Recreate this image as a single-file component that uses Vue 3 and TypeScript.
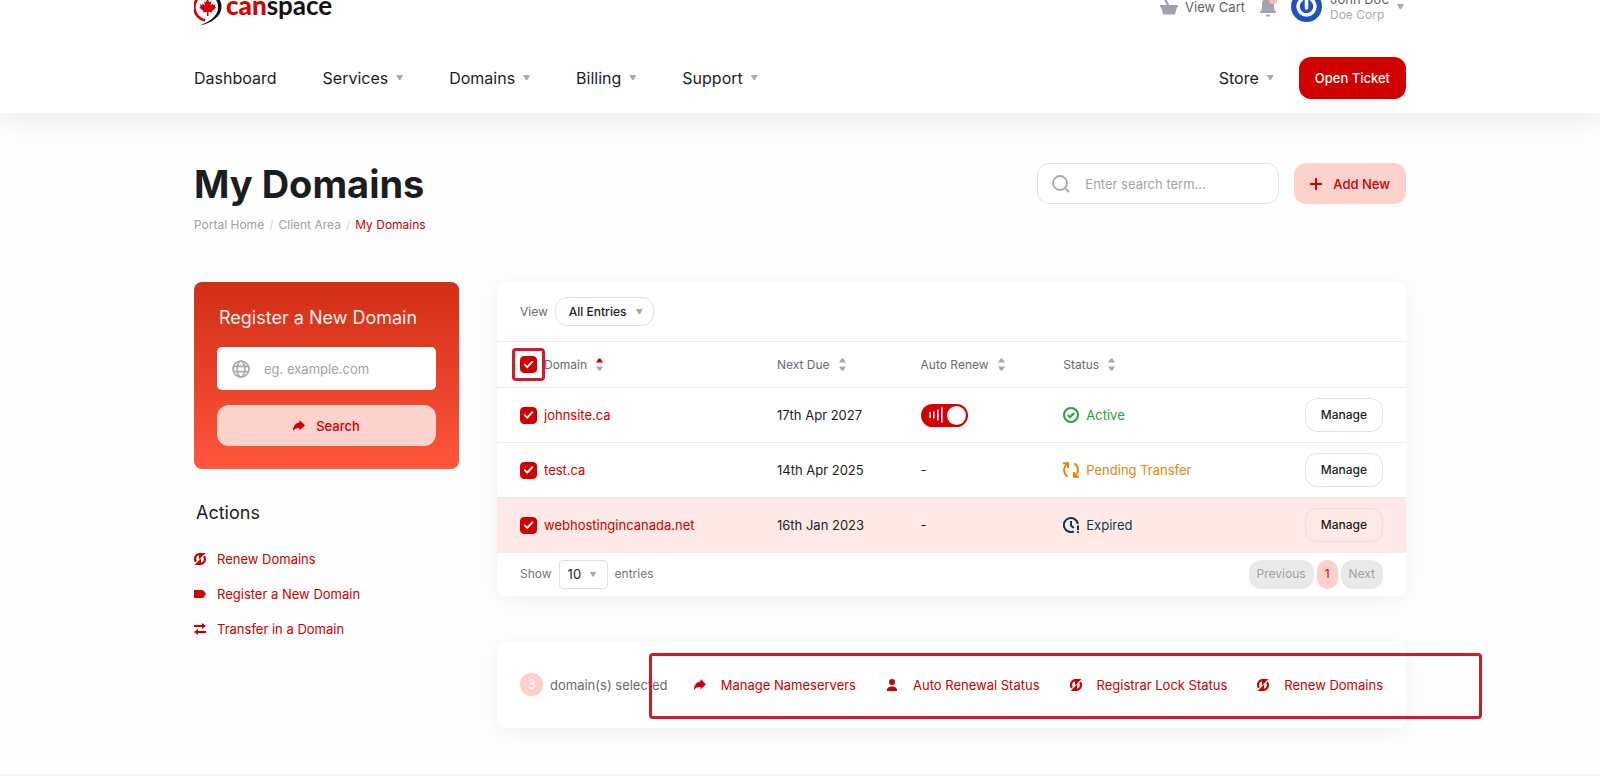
<script setup lang="ts">
import { computed, ref } from 'vue'

interface DomainRow {
  name: string
  due: string
  autoRenew: boolean | null
  status: string
  kind: 'active' | 'pending' | 'expired'
  selected: boolean
}

const menu: { label: string; drop: boolean }[] = [
  { label: 'Dashboard', drop: false },
  { label: 'Services', drop: true },
  { label: 'Domains', drop: true },
  { label: 'Billing', drop: true },
  { label: 'Support', drop: true },
]

const rows = ref<DomainRow[]>([
  { name: 'johnsite.ca', due: '17th Apr 2027', autoRenew: true, status: 'Active', kind: 'active', selected: true },
  { name: 'test.ca', due: '14th Apr 2025', autoRenew: null, status: 'Pending Transfer', kind: 'pending', selected: true },
  { name: 'webhostingincanada.net', due: '16th Jan 2023', autoRenew: null, status: 'Expired', kind: 'expired', selected: true },
])

const columns = ['Domain', 'Next Due', 'Auto Renew', 'Status']
const hovered = 'webhostingincanada.net'

const icons: Record<string, string> = {
  renew:
    'M5 0h6.500L5 6.500V2.300C3.200 2.800 2.200 4.200 2.200 6c0 .8.2 1.500.6 2.100L1.300 9.600C.4 8.600 0 7.400 0 6 0 2.800 2.200.4 5 0ZM7 12H.5L7 5.500v4.200C8.800 9.200 9.800 7.800 9.800 6c0-.8-.2-1.500-.6-2.100l1.500-1.500c.9 1 1.300 2.200 1.300 3.600 0 3.200-2.200 5.600-5 6Z',
  tag: 'M0 2h8.200c.6 0 1 .2 1.400.7L12 6 9.600 9.300c-.4.5-.8.7-1.400.7H0Z',
  transfer: 'M0 2h8V0l4 3-4 3V4H0ZM12 8H4V6L0 9l4 3v-2h8Z',
  share: 'M6.500 0 12 5.200 6.500 10.400V8C3.600 7.800 1.500 8.600 0 11 .1 6 2.600 2.900 6.500 2.600Z',
  user: 'M6 0a3 3 0 1 1 0 6 3 3 0 0 1 0-6ZM.8 12C.8 8.800 3 7.400 6 7.400S11.200 8.800 11.200 12Z',
}

const sideActions = [
  { icon: 'renew', label: 'Renew Domains' },
  { icon: 'tag', label: 'Register a New Domain' },
  { icon: 'transfer', label: 'Transfer in a Domain' },
]
const bulkActions = [
  { icon: 'share', label: 'Manage Nameservers' },
  { icon: 'user', label: 'Auto Renewal Status' },
  { icon: 'renew', label: 'Registrar Lock Status' },
  { icon: 'renew', label: 'Renew Domains' },
]

const selectedCount = computed(() => rows.value.filter((r) => r.selected).length)
const allSelected = computed({
  get: () => rows.value.every((r) => r.selected),
  set: (v: boolean) => rows.value.forEach((r) => (r.selected = v)),
})
</script>

<template>
  <div class="page">
    <header class="site-header">
      <div class="wrap top-bar">
        <a href="#" class="logo" aria-label="canspace">
          <svg width="30" height="40" viewBox="0 0 30 40">
            <path d="M11 34.500A13.500 13.500 0 0 1 9 8.700" fill="none" stroke="#d00000" stroke-width="2.600" />
            <path d="M12 7.500A13.400 13.400 0 0 1 27.500 21C27.500 31 17 37 6 39.500 14 36 24.200 31 24.200 21 24.200 14 19 9.500 12 9.500Z" fill="#111" />
            <path d="M13.500 13l1.900 3.200 1.900-.9-.7 4.200 2.200-2 .6 1.400 2.300-.4-.9 2.300 1.300.8-4 3.300.4 1.500-4.100-.6.100 4.200h-1.500l.1-4.200-4.200.6.500-1.500-4.100-3.300 1.300-.8-.8-2.300 2.300.4.600-1.400 2.200 2-.8-4.200 1.800.9Z" fill="#d00000" />
          </svg>
          <span class="brand"><b>can</b>space</span>
        </a>
        <div class="account">
          <a href="#" class="cart">
            <svg width="18" height="17" viewBox="0 0 18 17"><path d="M0 7h18v2h-1l-2 7.500H3.200L1 9H0ZM3 0l2.500-.5L9 6.500 7.500 8Z" fill="#a2a2ae" /></svg>
            View Cart
          </a>
          <button type="button" class="bell" aria-label="Notifications">
            <svg width="18" height="22" viewBox="0 0 18 22">
              <path d="M9 2c3.500 0 6 2.500 6 6v5.500l2 2.500v1H1v-1l2-2.500V8c0-3.500 2.500-6 6-6ZM6.800 18.500h4.400a2.200 2.200 0 0 1-4.400 0Z" fill="#a2a2ae" />
              <circle cx="14" cy="4" r="4" fill="#fdb9b5" />
            </svg>
          </button>
          <button type="button" class="profile">
            <svg width="31" height="31" viewBox="0 0 31 31">
              <circle cx="15.500" cy="15.500" r="15.500" fill="#1f52be" />
              <circle cx="15.500" cy="15.500" r="8.500" fill="#1f52be" stroke="#fff" stroke-width="3.500" />
              <path d="M15.500 5v9" stroke="#1f52be" stroke-width="7" />
              <path d="M15.500 8v9" stroke="#fff" stroke-width="3.500" stroke-linecap="round" />
            </svg>
            <span class="names"><span class="person">John Doe</span><span class="corp">Doe Corp</span></span>
            <i class="caret"></i>
          </button>
        </div>
      </div>
      <div class="wrap nav-bar">
        <nav class="menu">
          <a v-for="item in menu" :key="item.label" href="#">{{ item.label }}<i v-if="item.drop" class="caret"></i></a>
        </nav>
        <div class="menu-right">
          <a href="#">Store<i class="caret"></i></a>
          <button type="button" class="ticket">Open Ticket</button>
        </div>
      </div>
    </header>

    <main class="wrap">
      <div class="title-row">
        <div>
          <h1>My Domains</h1>
          <nav class="crumbs" aria-label="Breadcrumb">
            <a href="#">Portal Home</a><span>/</span><a href="#">Client Area</a><span>/</span><a href="#" class="current">My Domains</a>
          </nav>
        </div>
        <div class="tools">
          <label class="search">
            <svg width="18" height="18" viewBox="0 0 18 18" fill="none" stroke="#aaa" stroke-width="1.800"><circle cx="8" cy="8" r="7" /><path d="m13 13 4 4" /></svg>
            <input type="text" placeholder="Enter search term..." aria-label="Search domains" />
          </label>
          <button type="button" class="soft add">
            <svg width="12" height="12" viewBox="0 0 12 12"><path d="M6 0v12M0 6h12" stroke="#c80000" stroke-width="2" /></svg>
            Add New
          </button>
        </div>
      </div>

      <div class="columns">
        <aside>
          <form class="register" @submit.prevent>
            <h2>Register a New Domain</h2>
            <label class="domain-field">
              <svg width="18" height="18" viewBox="0 0 18 18" fill="none" stroke="#aaa" stroke-width="1.700"><circle cx="9" cy="9" r="8" /><ellipse cx="9" cy="9" rx="3.800" ry="8" /><path d="M1.500 6.300h15M1.500 11.700h15" /></svg>
              <input type="text" placeholder="eg. example.com" aria-label="Domain name" />
            </label>
            <button type="submit" class="soft">
              <svg width="12" height="12" viewBox="0 0 12 12"><path :d="icons.share" fill="#c80000" /></svg>
              Search
            </button>
          </form>
          <h3>Actions</h3>
          <ul class="side-actions">
            <li v-for="a in sideActions" :key="a.label">
              <a href="#"><svg width="12" height="12" viewBox="0 0 12 12"><path :d="icons[a.icon]" fill="#c80000" /></svg>{{ a.label }}</a>
            </li>
          </ul>
        </aside>

        <div class="content">
          <section class="card">
            <div class="view-row">
              <label for="view">View</label>
              <span class="pick round">
                <select id="view"><option>All Entries</option></select>
                <i class="caret"></i>
              </span>
            </div>
            <table>
              <colgroup><col class="c-domain" /><col class="c-due" /><col class="c-renew" /><col class="c-status" /><col /></colgroup>
              <thead>
                <tr>
                  <th v-for="(c, i) in columns" :key="c">
                    <div class="cell">
                      <span v-if="i === 0" class="all">
                        <input v-model="allSelected" type="checkbox" class="tick" aria-label="Select all domains" />
                        <span class="mark"></span>
                      </span>
                      <button type="button" class="sort">
                        {{ c }}
                        <svg width="7" height="13" viewBox="0 0 7 13">
                          <path d="M0 4.500 2.500.5h2L7 4.500Z" :fill="i === 0 ? '#d00000' : '#aaa'" />
                          <path d="M0 8.500h7l-2.500 4h-2Z" fill="#aaa" />
                        </svg>
                      </button>
                    </div>
                  </th>
                  <th aria-label="Manage"></th>
                </tr>
              </thead>
              <tbody>
                <tr v-for="r in rows" :key="r.name" :class="{ hovered: r.name === hovered }">
                  <td>
                    <div class="cell">
                      <input v-model="r.selected" type="checkbox" class="tick" :aria-label="'Select ' + r.name" />
                      <a href="#">{{ r.name }}</a>
                    </div>
                  </td>
                  <td>{{ r.due }}</td>
                  <td>
                    <label v-if="r.autoRenew !== null" class="switch">
                      <input v-model="r.autoRenew" type="checkbox" role="switch" :aria-label="'Auto renew ' + r.name" />
                      <svg width="14" height="16" viewBox="0 0 14 16"><path d="M1 5v6M4.800 4.500v7M8.800 2.500v11M12.800.5v15" stroke="#fff" stroke-width="1.600" /></svg>
                    </label>
                    <template v-else>-</template>
                  </td>
                  <td>
                    <div class="status" :class="r.kind">
                      <svg v-if="r.kind === 'active'" width="16" height="16" viewBox="0 0 16 16" fill="none" stroke="currentColor" stroke-width="2"><circle cx="8" cy="8" r="7" /><path d="m4.800 8 2.200 2.200 4-4.200" /></svg>
                      <svg v-else-if="r.kind === 'pending'" width="16" height="16" viewBox="0 0 16 16" fill="none" stroke="currentColor" stroke-width="2"><path d="M0 1.200h5V6M5 1.500C-.4 5 .2 11 4.500 14.800M16 14.800h-5V10M11 14.500C16.400 11 15.800 5 11.500 1.200" /></svg>
                      <svg v-else width="16" height="16" viewBox="0 0 16 16" fill="none" stroke="currentColor" stroke-width="2"><path d="M14.800 7A7 7 0 1 0 11 14.300M8 4v4.500l2.800 2.500M15 8.500V13M15 14.200V16" /></svg>
                      {{ r.status }}
                    </div>
                  </td>
                  <td class="right"><button type="button" class="manage">Manage</button></td>
                </tr>
              </tbody>
            </table>
            <div class="foot">
              <div class="show">
                <label for="size">Show</label>
                <span class="pick"><select id="size"><option>10</option></select><i class="caret"></i></span>
                entries
              </div>
              <div class="pager">
                <button type="button" disabled>Previous</button>
                <button type="button" class="on">1</button>
                <button type="button" disabled>Next</button>
              </div>
            </div>
          </section>

          <section class="card bulk">
            <div class="picked"><span class="count">{{ selectedCount }}</span>domain(s) selected</div>
            <div class="bulk-actions">
              <a v-for="a in bulkActions" :key="a.label" href="#"><svg width="12" height="12" viewBox="0 0 12 12"><path :d="icons[a.icon]" fill="#c80000" /></svg>{{ a.label }}</a>
            </div>
            <span class="mark"></span>
          </section>
        </div>
      </div>
    </main>
    <footer></footer>
  </div>
</template>

<style>
body {
  margin: 0;
  background: #fefefe;
  overflow: hidden;
}
</style>

<style scoped>
.page {
  font: 13px/20px Inter, 'Liberation Sans', sans-serif;
  color: #1c1d1f;
  height: 100vh;
  overflow: hidden;
}
.page *,
.page *::before {
  box-sizing: border-box;
}
a {
  color: inherit;
  text-decoration: none;
}
button,
input,
select {
  font: inherit;
  color: inherit;
  margin: 0;
}
button {
  border: 0;
  padding: 0;
  background: none;
  cursor: pointer;
}
svg {
  flex: none;
}
.wrap {
  max-width: 1212px;
  margin: 0 auto;
}
.caret {
  flex: none;
  width: 7px;
  height: 5px;
  background: #aaa;
  clip-path: polygon(0 0, 100% 0, 60% 100%, 40% 100%);
}

.site-header {
  background: #fff;
  box-shadow: 0 0 30px 6px rgba(0, 0, 0, 0.08);
}
.top-bar {
  display: flex;
  justify-content: space-between;
  height: 56px;
  margin-top: -14px;
}
.logo {
  display: flex;
  gap: 2px;
}
.brand {
  font: 700 26px/38px Lato, 'Liberation Sans', sans-serif;
  color: #111;
}
.brand b {
  color: #d00000;
}
.account {
  display: flex;
  align-items: center;
  height: 41px;
  color: #60636c;
}
.cart {
  display: flex;
  gap: 7px;
  align-items: center;
}
.bell {
  display: flex;
  margin: 0 14px;
}
.profile {
  display: flex;
  align-items: center;
  gap: 8px;
}
.profile .caret {
  margin: 0 2px 0 0;
}
.names {
  display: flex;
  flex-direction: column;
  text-align: left;
  line-height: 16px;
}
.corp {
  font-size: 12px;
  color: #aaaab2;
}
.nav-bar {
  display: flex;
  align-items: center;
  justify-content: space-between;
  height: 71px;
  font-size: 16px;
  line-height: 24px;
}
.menu,
.menu-right {
  display: flex;
  align-items: center;
  gap: 46px;
}
.menu-right {
  gap: 25px;
}
.menu a,
.menu-right a {
  display: flex;
  align-items: center;
  gap: 8px;
}
.ticket {
  height: 42px;
  padding: 0 16px;
  border-radius: 12px;
  background: #d00000;
  color: #fff;
  font-size: 13px;
  font-weight: 500;
}

.title-row {
  display: flex;
  justify-content: space-between;
  align-items: flex-start;
  padding-top: 50px;
}
h1 {
  margin: 0;
  font-size: 38px;
  line-height: 42px;
  font-weight: 700;
}
.crumbs {
  display: flex;
  gap: 5px;
  margin-top: 10px;
  font-size: 12px;
  color: #a0a0a0;
}
.crumbs span {
  color: #d4d4d4;
}
.crumbs .current {
  color: #c80000;
}
.tools {
  display: flex;
  gap: 15px;
}
.search {
  display: flex;
  align-items: center;
  gap: 15px;
  width: 242px;
  height: 41px;
  padding: 0 14px;
  border: 1px solid #e2e2e2;
  border-radius: 12px;
  background: #fff;
}
.search input,
.domain-field input {
  flex: 1;
  min-width: 0;
  border: 0;
  padding: 0;
  background: none;
  outline: 0;
}
::placeholder {
  color: #a3a3a3;
  opacity: 1;
}
.soft {
  display: flex;
  align-items: center;
  justify-content: center;
  gap: 11px;
  height: 41px;
  padding: 0 16px;
  border-radius: 12px;
  background: #fdd2cd;
  color: #c80000;
  font-weight: 500;
}

.columns {
  display: flex;
  align-items: flex-start;
  gap: 38px;
  margin-top: 47px;
}
aside {
  flex: none;
  width: 265px;
}
.content {
  flex: 1;
  min-width: 0;
}
.register {
  display: flex;
  flex-direction: column;
  gap: 15px;
  padding: 22px 23px 23px;
  border-radius: 8px;
  background: linear-gradient(#d12e16, #ff563d);
}
.register h2 {
  margin: 0 2px;
  font-size: 18px;
  line-height: 28px;
  font-weight: 400;
  color: #fff2ee;
}
.domain-field {
  display: flex;
  align-items: center;
  gap: 14px;
  height: 43px;
  padding: 0 15px;
  border-radius: 5px;
  background: #fff;
}
h3 {
  margin: 30px 2px 14px;
  font-size: 18px;
  line-height: 28px;
  font-weight: 400;
}
.side-actions {
  margin: 0;
  padding: 0;
  list-style: none;
}
.side-actions a {
  display: flex;
  align-items: center;
  gap: 11px;
  height: 35px;
  color: #c80000;
}

.card {
  border-radius: 8px;
  background: #fff;
  box-shadow: 0 4px 24px rgba(0, 0, 0, 0.06);
}
.view-row {
  display: flex;
  align-items: center;
  gap: 7px;
  height: 59px;
  padding: 0 23px;
  color: #686b70;
  font-size: 12px;
}
.pick {
  display: inline-flex;
  align-items: center;
  position: relative;
  color: #1c1d1f;
}
.pick select {
  appearance: none;
  height: 29px;
  padding: 0 25px 0 8px;
  border: 1px solid #e0e0e0;
  border-radius: 4px;
  background: #fff;
  outline: 0;
}
.pick.round select {
  padding: 0 26px 0 13px;
  border-radius: 12px;
  font-weight: 500;
}
.pick .caret {
  position: absolute;
  right: 11px;
  pointer-events: none;
}
table {
  width: 100%;
  table-layout: fixed;
  border-collapse: collapse;
}
.c-domain {
  width: 30.8%;
}
.c-due {
  width: 15.8%;
}
.c-renew {
  width: 15.7%;
}
.c-status {
  width: 20%;
}
th,
td {
  height: 55px;
  padding: 0;
  border-top: 1px solid #ebebeb;
  text-align: left;
}
th {
  height: 46px;
  font-size: 12px;
  font-weight: 400;
  color: #686b70;
}
th:first-child,
td:first-child {
  padding-left: 23px;
}
.cell {
  display: flex;
  align-items: center;
  gap: 7px;
}
.cell a {
  color: #c80000;
}
.all {
  position: relative;
  display: flex;
}
.mark {
  position: absolute;
  inset: -8px;
  border: 3px solid #d01c28;
  border-radius: 4px;
  pointer-events: none;
}
.tick {
  appearance: none;
  flex: none;
  display: grid;
  place-items: center;
  width: 17px;
  height: 17px;
  border: 1px solid #d0d0d0;
  border-radius: 4px;
}
.tick:checked {
  background: #d00000;
  border-color: #d00000;
}
.tick:checked::before {
  content: '';
  width: 10px;
  height: 8px;
  background: #fff;
  clip-path: polygon(0 52%, 14% 36%, 36% 66%, 86% 0, 100% 16%, 38% 100%);
}
.sort {
  display: flex;
  align-items: center;
  gap: 9px;
}
.hovered td {
  background: #fee9e6;
}
.switch {
  display: inline-flex;
  align-items: center;
  position: relative;
  vertical-align: middle;
}
.switch input {
  appearance: none;
  width: 47px;
  height: 23px;
  padding: 2px;
  border-radius: 12px;
  background: #bbb;
}
.switch input:checked {
  background: #d00000;
}
.switch input::before {
  content: '';
  display: block;
  width: 19px;
  height: 19px;
  border-radius: 50%;
  background: #fff;
}
.switch input:checked::before {
  margin-left: auto;
}
.switch svg {
  position: absolute;
  left: 8px;
}
.status {
  display: flex;
  align-items: center;
  gap: 7px;
}
.active {
  color: #28a03c;
}
.pending {
  color: #e8850c;
}
.expired {
  color: #0d3a52;
}
.right {
  text-align: right;
  padding-right: 23px;
}
.manage {
  height: 34px;
  padding: 0 15px;
  border: 1px solid #e2e2e2;
  border-radius: 12px;
  font-size: 12px;
  font-weight: 500;
}
.foot {
  display: flex;
  align-items: center;
  justify-content: space-between;
  height: 43px;
  padding: 0 23px;
  font-size: 12px;
  color: #74777b;
}
.show {
  display: flex;
  align-items: center;
  gap: 7px;
}
.show select {
  font-size: 13px;
}
.pager {
  display: flex;
  gap: 3px;
}
.pager button {
  height: 29px;
  padding: 0 8px;
  border-radius: 12px;
  background: #e9e9ea;
  color: #a0a2a5;
}
.pager .on {
  background: #fdd0cc;
  color: #c80000;
}

.bulk {
  position: relative;
  display: flex;
  align-items: center;
  justify-content: space-between;
  height: 86px;
  margin-top: 46px;
  padding: 0 23px;
}
.picked {
  display: flex;
  align-items: center;
  gap: 7px;
  color: #686b70;
}
.count {
  width: 23px;
  height: 23px;
  border-radius: 50%;
  background: #fdd0cc;
  color: #fff;
  line-height: 23px;
  text-align: center;
}
.bulk-actions {
  display: flex;
  gap: 30px;
}
.bulk-actions a {
  display: flex;
  align-items: center;
  gap: 15px;
  color: #c80000;
}
.bulk > .mark {
  inset: 11px -76px 9px 152px;
}
footer {
  height: 100px;
  margin-top: 46px;
  background: #f6f6f6;
}
</style>
